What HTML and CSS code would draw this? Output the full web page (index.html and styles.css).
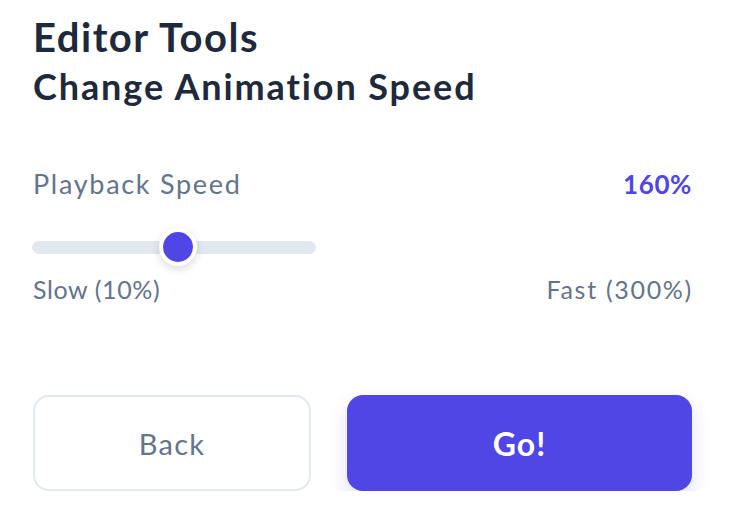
FILE: index.html
```html
<!DOCTYPE html>
<html lang="en">
<head>
<meta charset="utf-8">
<title>Editor Tools</title>
<link rel="stylesheet" href="styles.css">
</head>
<body>
<main class="page">
  <header class="head">
    <h1 class="title">Editor Tools</h1>
    <h2 class="subtitle">Change Animation Speed</h2>
  </header>
  <section class="speed">
    <div class="speed-row">
      <span class="label">Playback Speed</span>
      <span class="value">160%</span>
    </div>
    <div class="slider-wrap">
      <input class="slider" type="range" min="10" max="300" value="160" aria-label="Playback Speed">
    </div>
    <div class="speed-row range-labels">
      <span class="min">Slow (10%)</span>
      <span class="max">Fast (300%)</span>
    </div>
  </section>
  <div class="actions">
    <button class="btn btn-back" type="button">Back</button>
    <button class="btn btn-go" type="button">Go!</button>
  </div>
</main>
</body>
</html>
```
FILE: styles.css
```css
* { box-sizing: border-box; }
body {
  margin: 0;
  background: #ffffff;
  font-family: "Lato", "Noto Sans", sans-serif;
  color: #1e293b;
}
.page {
  width: 692px;
  padding: 14px 0 0 33px;
}
.head { margin: 0; }
.title {
  margin: 0;
  font-size: 40px;
  line-height: 46px;
  font-weight: 700;
  letter-spacing: 1.5px;
  color: #1e293b;
}
.subtitle {
  margin: 0;
  font-size: 36px;
  line-height: 52px;
  font-weight: 700;
  letter-spacing: 1.9px;
  color: #1e293b;
}
.speed { margin-top: 57px; }
.speed-row {
  display: flex;
  justify-content: space-between;
  align-items: baseline;
  font-size: 27px;
  line-height: 30px;
  color: #64748b;
}
.label { letter-spacing: 1.7px; }
.value {
  font-size: 26px;
  font-weight: 700;
  letter-spacing: 0.6px;
  color: #4f46e5;
}
.slider-wrap {
  width: 284px;
  height: 50px;
  display: flex;
  align-items: center;
  margin: 23px 0 0 -1px;
}
.slider {
  -webkit-appearance: none;
  appearance: none;
  width: 284px;
  height: 13px;
  margin: 0;
  border-radius: 7px;
  background: #e2e8f0;
  outline: none;
}
.slider::-webkit-slider-thumb {
  -webkit-appearance: none;
  appearance: none;
  width: 38px;
  height: 38px;
  border-radius: 50%;
  background: #4f46e5;
  border: 4px solid #ffffff;
  box-shadow: 0 3px 8px rgba(15, 23, 42, 0.15);
}
.range-labels {
  margin-top: 2px;
  font-size: 25px;
}
.min { letter-spacing: 0.6px; }
.max { letter-spacing: 1.7px; margin-right: -1px; }
.actions {
  display: grid;
  grid-template-columns: 278px 1fr;
  gap: 36px;
  margin-top: 91px;
}
.btn {
  height: 96px;
  border-radius: 16px;
  font-family: inherit;
  cursor: pointer;
}
.btn-back {
  background: #ffffff;
  border: 2px solid #e2e8f0;
  color: #64748b;
  font-weight: 400;
  font-size: 29px;
  letter-spacing: 1.2px;
}
.btn-go {
  background: #4f46e5;
  border: none;
  color: #ffffff;
  font-weight: 700;
  font-size: 32px;
  letter-spacing: 1px;
  box-shadow: 0 8px 18px rgba(79, 70, 229, 0.18);
}
```
